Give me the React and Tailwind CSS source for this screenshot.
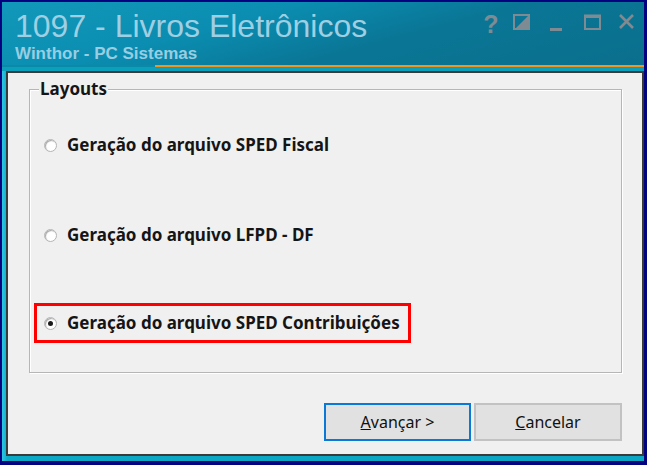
import React, { useState } from "react";

const options = [
  { id: "fiscal", label: "Geração do arquivo SPED Fiscal" },
  { id: "lfpd", label: "Geração do arquivo LFPD - DF" },
  { id: "contrib", label: "Geração do arquivo SPED Contribuições" },
];

function Radio({ checked }) {
  return (
    <span className="w-[13px] h-[13px] rounded-full bg-white border border-[#b4b4b4] shadow-[inset_1px_1px_1px_rgba(0,0,0,0.35)] flex items-center justify-center shrink-0">
      {checked && <span className="w-[5px] h-[5px] rounded-full bg-[#1a1a1a]" />}
    </span>
  );
}

function TitleIcons() {
  return (
    <div className="flex items-start text-[#7f8b92] pt-[12px]">
      <span className="w-[24px] text-center text-[25px] font-bold leading-[20px] [font-family:'Liberation_Sans',sans-serif]">?</span>
      <svg width="18" height="17" viewBox="0 0 18 17" className="ml-[10px]">
        <rect x="1" y="1" width="15" height="14" fill="none" stroke="#7f8b92" strokeWidth="2" />
        <path d="M16 1 L16 15 L2 15 Z" fill="#7f8b92" />
      </svg>
      <div className="w-[12px] h-[3px] bg-[#7f8b92] mt-[14px] ml-[19px]" />
      <svg width="18" height="17" viewBox="0 0 18 17" className="ml-[22px]">
        <rect x="1" y="1.5" width="15" height="13.5" fill="none" stroke="#7f8b92" strokeWidth="2" />
        <rect x="1" y="1" width="15" height="3" fill="#7f8b92" />
      </svg>
      <svg width="17" height="16" viewBox="0 0 17 16" className="ml-[16px] mr-[9px]">
        <path d="M2 1 L15 14 M15 1 L2 14" stroke="#7f8b92" strokeWidth="2.6" />
      </svg>
    </div>
  );
}

export default function App() {
  const [selected, setSelected] = useState("contrib");

  return (
    <div className="w-[647px] h-[465px] bg-[#03037f] pl-[2px] pt-[2px] pr-[3px] pb-[4px] overflow-hidden">
      <div className="h-full flex flex-col bg-[linear-gradient(to_right,#2cc6e2_0px,#0aa9c6_6px,#0aa6c4_100%)]">
        {/* Title bar */}
        <div className="h-[63px] flex justify-between bg-[linear-gradient(165deg,#1298ba_0%,#0a8db0_35%,#0a7696_60%,#0a6f8d_100%)]">
          <div className="pl-[13px] pt-[6px]">
            <div className="text-[32px] leading-[36px] text-[#9fcfe2] [font-family:'Liberation_Sans',sans-serif]">
              1097 - Livros Eletrônicos
            </div>
            <div className="text-[17px] leading-[19px] font-bold text-[#98cde2] [font-family:'Liberation_Sans',sans-serif]">
              Winthor - PC Sistemas
            </div>
          </div>
          <TitleIcons />
        </div>
        <div className="h-[2px] flex bg-[#0a8aa6]">
          <div className="w-[153px]" />
          <div className="flex-1 bg-[#f2951e]" />
        </div>
        <div className="h-[4px] bg-[#0aa0bb]" />

        {/* Content panel */}
        <div className="flex-1 pl-[4px] pb-[5px] flex">
          <div className="flex-1 bg-[#f0f0f0] border-2 border-[#3a3a3a] pl-[21px] pt-[16px] [font-family:'Noto_Sans',sans-serif]">
            <div className="relative w-[593px] h-[284px] border border-[#b6b6b6] shadow-[inset_1px_1px_0_#ffffff,1px_1px_0_#ffffff]">
              <span className="absolute left-[9px] top-[-11px] bg-[#f0f0f0] px-[1px] text-[17px] leading-[20px] font-bold text-[#151515]">
                Layouts
              </span>
              <div className="flex flex-col pt-[35px] pl-[4px]">
                {options.map((o, i) => (
                  <div
                    key={o.id}
                    onClick={() => setSelected(o.id)}
                    className={
                      (i === 2 ? "border-[#ff0000] mt-[48px] " : "border-transparent ") +
                      (i === 1 ? "mt-[50px] " : "") +
                      "w-[377px] h-[40px] border-[3px] flex items-center pl-[7px] gap-[10px] cursor-pointer"
                    }
                  >
                    <Radio checked={selected === o.id} />
                    <span className="text-[17px] leading-[20px] font-bold text-[#151515] whitespace-nowrap">{o.label}</span>
                  </div>
                ))}
              </div>
            </div>

            <div className="w-[593px] flex justify-end gap-[3px] mt-[30px]">
              <button className="w-[147px] h-[38px] bg-[#e1e1e1] border-2 border-[#0a78d7] text-[16px] text-[#111]">
                <span className="underline">A</span>vançar &gt;
              </button>
              <button className="w-[148px] h-[38px] bg-[#e1e1e1] border-2 border-[#c2c2c2] text-[16px] text-[#111]">
                <span className="underline">C</span>ancelar
              </button>
            </div>
          </div>
        </div>
      </div>
    </div>
  );
}
